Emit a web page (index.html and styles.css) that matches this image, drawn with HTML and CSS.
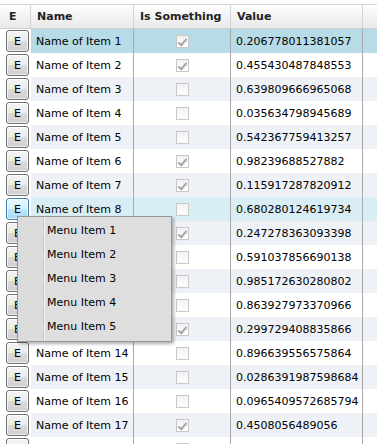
FILE: index.html
```html
<!DOCTYPE html>
<html lang="en">
<head>
    <meta charset="UTF-8">
    <title>Items Grid</title>
    <link rel="stylesheet" href="styles.css">
</head>
<body>
    <div class="grid">
        <div class="row head">
            <div class="cell c-e">E</div>
            <div class="cell c-name">Name</div>
            <div class="cell c-flag">Is Something</div>
            <div class="cell c-value">Value</div>
            <div class="cell c-fill"></div>
        </div>

        <div class="row selected">
            <div class="cell c-e"><button class="edit">E</button></div>
            <div class="cell c-name">Name of Item 1</div>
            <div class="cell c-flag"><span class="check on"></span></div>
            <div class="cell c-value">0.206778011381057</div>
            <div class="cell c-fill"></div>
        </div>
        <div class="row">
            <div class="cell c-e"><button class="edit">E</button></div>
            <div class="cell c-name">Name of Item 2</div>
            <div class="cell c-flag"><span class="check on"></span></div>
            <div class="cell c-value">0.455430487848553</div>
            <div class="cell c-fill"></div>
        </div>
        <div class="row alt">
            <div class="cell c-e"><button class="edit">E</button></div>
            <div class="cell c-name">Name of Item 3</div>
            <div class="cell c-flag"><span class="check"></span></div>
            <div class="cell c-value">0.639809666965068</div>
            <div class="cell c-fill"></div>
        </div>
        <div class="row">
            <div class="cell c-e"><button class="edit">E</button></div>
            <div class="cell c-name">Name of Item 4</div>
            <div class="cell c-flag"><span class="check"></span></div>
            <div class="cell c-value">0.035634798945689</div>
            <div class="cell c-fill"></div>
        </div>
        <div class="row alt">
            <div class="cell c-e"><button class="edit">E</button></div>
            <div class="cell c-name">Name of Item 5</div>
            <div class="cell c-flag"><span class="check"></span></div>
            <div class="cell c-value">0.542367759413257</div>
            <div class="cell c-fill"></div>
        </div>
        <div class="row">
            <div class="cell c-e"><button class="edit">E</button></div>
            <div class="cell c-name">Name of Item 6</div>
            <div class="cell c-flag"><span class="check on"></span></div>
            <div class="cell c-value">0.98239688527882</div>
            <div class="cell c-fill"></div>
        </div>
        <div class="row alt">
            <div class="cell c-e"><button class="edit">E</button></div>
            <div class="cell c-name">Name of Item 7</div>
            <div class="cell c-flag"><span class="check on"></span></div>
            <div class="cell c-value">0.115917287820912</div>
            <div class="cell c-fill"></div>
        </div>
        <div class="row current">
            <div class="cell c-e"><button class="edit focused">E</button></div>
            <div class="cell c-name">Name of Item 8</div>
            <div class="cell c-flag"><span class="check"></span></div>
            <div class="cell c-value">0.680280124619734</div>
            <div class="cell c-fill"></div>
        </div>
        <div class="row alt">
            <div class="cell c-e"><button class="edit">E</button></div>
            <div class="cell c-name">Name of Item 9</div>
            <div class="cell c-flag"><span class="check on"></span></div>
            <div class="cell c-value">0.247278363093398</div>
            <div class="cell c-fill"></div>
        </div>
        <div class="row">
            <div class="cell c-e"><button class="edit">E</button></div>
            <div class="cell c-name">Name of Item 10</div>
            <div class="cell c-flag"><span class="check"></span></div>
            <div class="cell c-value">0.591037856690138</div>
            <div class="cell c-fill"></div>
        </div>
        <div class="row alt">
            <div class="cell c-e"><button class="edit">E</button></div>
            <div class="cell c-name">Name of Item 11</div>
            <div class="cell c-flag"><span class="check"></span></div>
            <div class="cell c-value">0.985172630280802</div>
            <div class="cell c-fill"></div>
        </div>
        <div class="row">
            <div class="cell c-e"><button class="edit">E</button></div>
            <div class="cell c-name">Name of Item 12</div>
            <div class="cell c-flag"><span class="check"></span></div>
            <div class="cell c-value">0.863927973370966</div>
            <div class="cell c-fill"></div>
        </div>
        <div class="row alt">
            <div class="cell c-e"><button class="edit">E</button></div>
            <div class="cell c-name">Name of Item 13</div>
            <div class="cell c-flag"><span class="check on"></span></div>
            <div class="cell c-value">0.299729408835866</div>
            <div class="cell c-fill"></div>
        </div>
        <div class="row">
            <div class="cell c-e"><button class="edit">E</button></div>
            <div class="cell c-name">Name of Item 14</div>
            <div class="cell c-flag"><span class="check"></span></div>
            <div class="cell c-value">0.896639556575864</div>
            <div class="cell c-fill"></div>
        </div>
        <div class="row alt">
            <div class="cell c-e"><button class="edit">E</button></div>
            <div class="cell c-name">Name of Item 15</div>
            <div class="cell c-flag"><span class="check"></span></div>
            <div class="cell c-value">0.0286391987598684</div>
            <div class="cell c-fill"></div>
        </div>
        <div class="row">
            <div class="cell c-e"><button class="edit">E</button></div>
            <div class="cell c-name">Name of Item 16</div>
            <div class="cell c-flag"><span class="check"></span></div>
            <div class="cell c-value">0.0965409572685794</div>
            <div class="cell c-fill"></div>
        </div>
        <div class="row alt">
            <div class="cell c-e"><button class="edit">E</button></div>
            <div class="cell c-name">Name of Item 17</div>
            <div class="cell c-flag"><span class="check on"></span></div>
            <div class="cell c-value">0.4508056489056</div>
            <div class="cell c-fill"></div>
        </div>
        <div class="row">
            <div class="cell c-e"><button class="edit">E</button></div>
            <div class="cell c-name">Name of Item 18</div>
            <div class="cell c-flag"><span class="check"></span></div>
            <div class="cell c-value">0.713360257141128</div>
            <div class="cell c-fill"></div>
        </div>
    </div>

    <!-- context menu opened on row 8 -->
    <div class="menu">
        <div class="menu-item">Menu Item 1</div>
        <div class="menu-item">Menu Item 2</div>
        <div class="menu-item">Menu Item 3</div>
        <div class="menu-item">Menu Item 4</div>
        <div class="menu-item">Menu Item 5</div>
    </div>
</body>
</html>
```

FILE: styles.css
```css
html, body {
    margin: 0;
    height: 100%;
    overflow: hidden;
}
body {
    font-family: "DejaVu Sans", Verdana, sans-serif;
    font-size: 11px;
    color: #000;
    background-color: white;
    position: relative;
}
.grid {
    padding-top: 4px;
}
.row {
    display: grid;
    grid-template-columns: 31px 103px 97px 132px 1fr;
    height: 24px;
}
.cell {
    display: flex;
    align-items: center;
    border-right: 1px solid #a9a9a9;
    box-sizing: border-box;
    white-space: nowrap;
    overflow: hidden;
}
.c-e {
    border-right: none;
    background-color: white;
}
.c-name, .c-value {
    padding-left: 5px;
}
.c-flag {
    justify-content: center;
}
.c-fill {
    border-right: none;
}

/* header */
.head {
    height: 25px;
    border-top: 1px solid #d5d5d5;
    border-bottom: 1px solid #d0d0d0;
    box-sizing: border-box;
    background: linear-gradient(#ffffff, #f3f3f3 50%, #e9e9e9);
    font-weight: bold;
    color: #222;
}
.head .cell {
    background: transparent;
    border-right: 1px solid #d5d5d5;
    justify-content: flex-start;
    padding-left: 6px;
}
.head .c-e {
    padding-left: 9px;
}
.head .c-fill {
    border-right: none;
}

/* rows */
.alt {
    background-color: #eef2f7;
}
.selected {
    background-color: #b7dce7;
}
.current {
    background-color: #d9eef4;
}

.edit {
    width: 23px;
    height: 22px;
    margin-left: 6px;
    padding: 0;
    font-family: inherit;
    font-size: 11px;
    color: #000;
    border: 1px solid #707070;
    border-radius: 3px;
    background: linear-gradient(#f4f4f4, #ebebeb 50%, #dcdcdc 51%, #cfcfcf);
    box-shadow: inset 0 0 0 1px rgba(255,255,255,0.7);
}
.edit.focused {
    border-color: #3c7fb1;
    background: linear-gradient(#eaf6fd, #d9f0fc 50%, #bee6fd 51%, #a7d9f5);
}

/* read-only checkbox */
.check {
    width: 13px;
    height: 13px;
    box-sizing: border-box;
    border: 1px solid #c9c9c9;
    background: linear-gradient(#f1f1f1, #ffffff);
    position: relative;
}
.check.on::after {
    content: "";
    position: absolute;
    left: 3px;
    top: 1px;
    width: 3px;
    height: 7px;
    border-right: 2px solid #a6a6a6;
    border-bottom: 2px solid #a6a6a6;
    transform: rotate(40deg);
}

/* context menu */
.menu {
    position: absolute;
    left: 17px;
    top: 216px;
    width: 155px;
    padding: 2px 0;
    box-sizing: border-box;
    border: 1px solid #979797;
    background: linear-gradient(to right, #dcdcdc 25px, #c5c5c5 25px, #c5c5c5 26px, #f5f5f5 26px, #f5f5f5 27px, #dedede 27px);
    box-shadow: 2px 2px 3px rgba(0,0,0,0.3);
}
.menu-item {
    height: 24px;
    line-height: 24px;
    padding-left: 29px;
    color: #000;
}
```
